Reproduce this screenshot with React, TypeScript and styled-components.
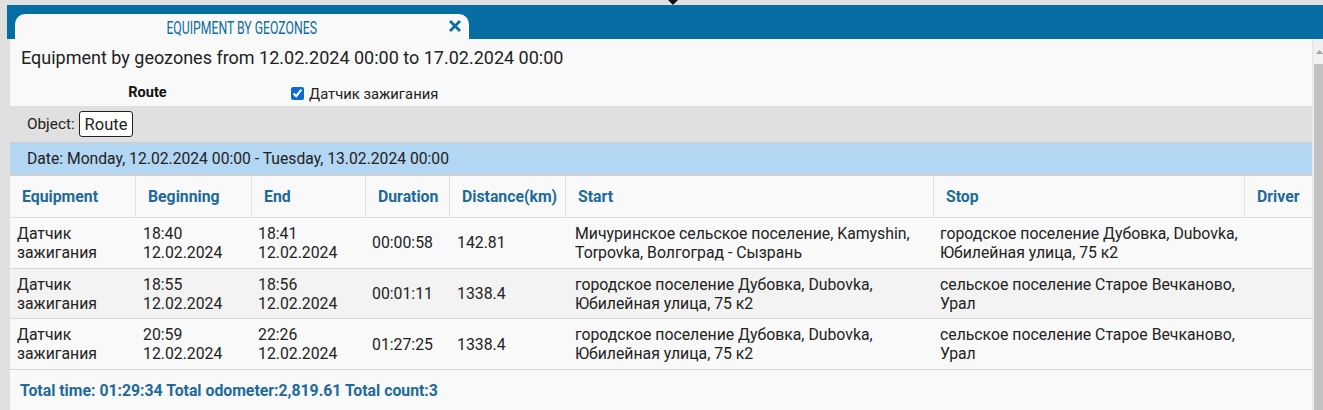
import React from "react";
import styled, { createGlobalStyle } from "styled-components";

const Global = createGlobalStyle`
  html, body { margin: 0; padding: 0; background: #e0e0e0; }
  body { font-family: Roboto, "Liberation Sans", sans-serif; color: #222; overflow: hidden; }
  * { box-sizing: border-box; }
`;

const Page = styled.div`
  width: 1323px;
  height: 410px;
  background: #e0e0e0;
  display: flex;
  flex-direction: column;
  overflow: hidden;
`;

const TopStrip = styled.div`
  height: 5px;
  padding-left: 667px;
  display: flex;
  align-items: flex-start;
`;

const HeaderBar = styled.div`
  margin-left: 7px;
  height: 34px;
  background: #076ea3;
  display: flex;
  align-items: flex-end;
  padding-left: 8px;
`;

const Tab = styled.div`
  width: 454px;
  height: 25px;
  background: #f9f9f9;
  border-radius: 10px 10px 0 0;
  display: flex;
  align-items: center;
  justify-content: center;
  position: relative;
`;

const TabTitle = styled.span`
  display: inline-block;
  font-family: Roboto, "Liberation Sans", sans-serif;
  font-size: 18px;
  color: #0b6da2;
  transform: scaleX(0.68);
  white-space: nowrap;
  margin-top: 2px;
`;

const CloseButton = styled.span`
  position: absolute;
  right: 7px;
  top: 2px;
  width: 14px;
  height: 20px;
  display: flex;
  align-items: center;
  justify-content: center;
`;

const BodyArea = styled.div`
  flex: 1;
  display: flex;
  margin-left: 10px;
  min-height: 0;
`;

const Content = styled.div`
  width: 1302px;
  background: #f9f9f9;
  display: flex;
  flex-direction: column;
`;

const Scrollbar = styled.div`
  width: 11px;
  background: #f1f1f1;
  border-left: 1px solid #e4e4e4;
  display: flex;
  flex-direction: column;
  align-items: center;
`;

const ScrollArrow = styled.div`
  height: 25px;
  display: flex;
  align-items: center;
  justify-content: center;
  padding-left: 2px;
`;

const ScrollThumb = styled.div`
  flex: 1;
  width: 9px;
  margin-left: 1px;
  background: #c1c1c1;
`;

const Heading = styled.div`
  height: 41px;
  padding: 8px 0 0 11px;
  font-size: 18px;
  color: #222;
`;

const OptionsRow = styled.div`
  height: 26px;
  display: flex;
  align-items: center;
`;

const OptionLabelCell = styled.div`
  width: 275px;
  text-align: center;
  font-size: 14.5px;
  font-weight: bold;
  color: #111;
  margin-top: -2px;
`;

const CheckLabel = styled.label`
  display: flex;
  align-items: center;
  padding-left: 6px;
  padding-top: 1px;
  gap: 5px;
  font-size: 14.8px;
  color: #222;
  input {
    margin: 0;
    width: 13px;
    height: 13px;
    accent-color: #0a6ad6;
  }
`;

const ObjectBar = styled.div`
  height: 37px;
  background: #e0e0e0;
  border-bottom: 1px solid #cfcfcf;
  display: flex;
  align-items: center;
  padding-left: 17px;
  gap: 4px;
  font-size: 15.3px;
  color: #222;
`;

const RouteButton = styled.button`
  font-family: Roboto, "Liberation Sans", sans-serif;
  font-size: 16.5px;
  color: #222;
  background: #fff;
  border: 1px solid #222;
  border-radius: 3px;
  height: 26px;
  padding: 0 5px;
`;

const DateBar = styled.div`
  height: 33px;
  background: #b3d6f3;
  border-bottom: 2px solid #d0d0d0;
  display: flex;
  align-items: center;
  padding-left: 17px;
  font-size: 15.7px;
  color: #222;
`;

const COLS = "126px 116px 114px 84px 116px 368px 311px 1fr";

const HeaderRow = styled.div`
  display: grid;
  grid-template-columns: ${COLS};
  height: 42px;
  border-bottom: 1px solid #dcdcdc;
`;

const HeaderCell = styled.div<{ $last?: boolean }>`
  display: flex;
  align-items: center;
  padding-left: 12px;
  font-size: 15.8px;
  font-weight: bold;
  color: #1e6a9c;
  border-right: ${(p) => (p.$last ? "none" : "1px solid #e0e0e0")};
`;

const DataRow = styled.div<{ $alt?: boolean }>`
  display: grid;
  grid-template-columns: ${COLS};
  height: 50.7px;
  background: ${(p) => (p.$alt ? "#f3f3f3" : "#f9f9f9")};
  border-bottom: 1px solid #d6d6d6;
`;

const DataCell = styled.div<{ $pad?: number }>`
  display: flex;
  align-items: center;
  padding: 0 4px 0 ${(p) => p.$pad ?? 7}px;
  font-size: 15.8px;
  line-height: 19px;
  color: #222;
  white-space: pre-line;
`;

const Footer = styled.div`
  padding: 11px 0 0 10px;
  font-size: 15.8px;
  font-weight: bold;
  color: #1e6a9c;
`;

const rows = [
  {
    eq: "Датчик\nзажигания",
    b: "18:40\n12.02.2024",
    e: "18:41\n12.02.2024",
    d: "00:00:58",
    km: "142.81",
    start: "Мичуринское сельское поселение, Kamyshin,\nTorpovka, Волгоград - Сызрань",
    stop: "городское поселение Дубовка, Dubovka,\nЮбилейная улица, 75 к2",
  },
  {
    eq: "Датчик\nзажигания",
    b: "18:55\n12.02.2024",
    e: "18:56\n12.02.2024",
    d: "00:01:11",
    km: "1338.4",
    start: "городское поселение Дубовка, Dubovka,\nЮбилейная улица, 75 к2",
    stop: "сельское поселение Старое Вечканово,\nУрал",
  },
  {
    eq: "Датчик\nзажигания",
    b: "20:59\n12.02.2024",
    e: "22:26\n12.02.2024",
    d: "01:27:25",
    km: "1338.4",
    start: "городское поселение Дубовка, Dubovka,\nЮбилейная улица, 75 к2",
    stop: "сельское поселение Старое Вечканово,\nУрал",
  },
];

const headers = ["Equipment", "Beginning", "End", "Duration", "Distance(km)", "Start", "Stop", "Driver"];

export default function App() {
  return (
    <Page>
      <Global />
      <TopStrip>
        <svg width="12" height="5" viewBox="0 0 12 5">
          <path d="M1 0 L11 0 L6 5 Z" fill="#111" />
        </svg>
      </TopStrip>
      <HeaderBar>
        <Tab>
          <TabTitle>EQUIPMENT BY GEOZONES</TabTitle>
          <CloseButton>
            <svg width="12" height="12" viewBox="0 0 12 12">
              <path d="M2 2 L10 10 M10 2 L2 10" stroke="#0b6da2" strokeWidth="2.8" strokeLinecap="square" />
            </svg>
          </CloseButton>
        </Tab>
      </HeaderBar>
      <BodyArea>
        <Content>
          <Heading>Equipment by geozones from 12.02.2024 00:00 to 17.02.2024 00:00</Heading>
          <OptionsRow>
            <OptionLabelCell>Route</OptionLabelCell>
            <CheckLabel>
              <input type="checkbox" defaultChecked />
              Датчик зажигания
            </CheckLabel>
          </OptionsRow>
          <ObjectBar>
            Object:
            <RouteButton>Route</RouteButton>
          </ObjectBar>
          <DateBar>Date: Monday, 12.02.2024 00:00 - Tuesday, 13.02.2024 00:00</DateBar>
          <HeaderRow>
            {headers.map((h, i) => (
              <HeaderCell key={h} $last={i === headers.length - 1}>
                {h}
              </HeaderCell>
            ))}
          </HeaderRow>
          {rows.map((r, i) => (
            <DataRow key={i} $alt={i === 1}>
              <DataCell>{r.eq}</DataCell>
              <DataCell>{r.b}</DataCell>
              <DataCell $pad={6}>{r.e}</DataCell>
              <DataCell $pad={6}>{r.d}</DataCell>
              <DataCell>{r.km}</DataCell>
              <DataCell $pad={9}>{r.start}</DataCell>
              <DataCell $pad={6}>{r.stop}</DataCell>
              <DataCell />
            </DataRow>
          ))}
          <Footer>Total time: 01:29:34 Total odometer:2,819.61 Total count:3</Footer>
        </Content>
        <Scrollbar>
          <ScrollArrow>
            <svg width="7" height="4" viewBox="0 0 7 4">
              <path d="M0 4 L3.5 0 L7 4 Z" fill="#a3a3a3" />
            </svg>
          </ScrollArrow>
          <ScrollThumb />
        </Scrollbar>
      </BodyArea>
    </Page>
  );
}
